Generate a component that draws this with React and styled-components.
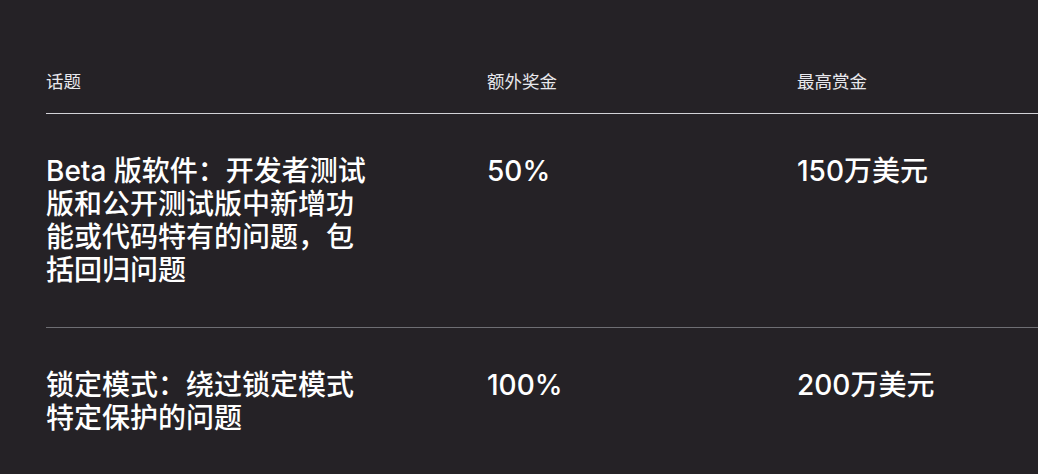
import React from "react";
import styled, { createGlobalStyle } from "styled-components";

const GlobalStyle = createGlobalStyle`
  html, body {
    margin: 0;
    padding: 0;
    background: #252226;
    overflow: hidden;
  }
  body {
    font-family: "Inter", "Noto Sans CJK SC", sans-serif;
    color: #f5f5f7;
    -webkit-font-smoothing: antialiased;
  }
`;

const Page = styled.div`
  width: 1038px;
  height: 474px;
  padding: 68px 0 0 46px;
  box-sizing: border-box;
`;

const Table = styled.div`
  width: 1040px;
`;

const Row = styled.div`
  display: grid;
  grid-template-columns: 441px 310px 1fr;
  align-items: start;
  padding: ${(p) => (p.head ? "0 0 20px" : "41px 0 40px")};
  border-bottom: 1px solid ${(p) => (p.head ? "#d2d2d7" : "#6e6e73")};

  &:last-child {
    border-bottom: none;
  }
`;

const HeadCell = styled.div`
  font-size: 17.5px;
  line-height: 25px;
  font-weight: 400;
  color: #e8e8ed;
  font-family: "Noto Sans CJK SC", "Inter", sans-serif;
`;

const Topic = styled.div`
  max-width: 325px;
  font-size: 28px;
  line-height: 33px;
  font-weight: 500;
  color: #ffffff;
`;

const Value = styled.div`
  font-size: 28px;
  line-height: 33px;
  font-weight: 500;
  color: #ffffff;
`;

const rows = [
  {
    topic: "Beta 版软件：开发者测试版和公开测试版中新增功能或代码特有的问题，包括回归问题",
    bonus: "50%",
    max: "150万美元",
  },
  {
    topic: "锁定模式：绕过锁定模式特定保护的问题",
    bonus: "100%",
    max: "200万美元",
  },
];

export default function App() {
  return (
    <>
      <GlobalStyle />
      <Page>
        <Table>
          <Row head>
            <HeadCell>话题</HeadCell>
            <HeadCell>额外奖金</HeadCell>
            <HeadCell>最高赏金</HeadCell>
          </Row>
          {rows.map((r) => (
            <Row key={r.bonus}>
              <Topic>{r.topic}</Topic>
              <Value>{r.bonus}</Value>
              <Value>{r.max}</Value>
            </Row>
          ))}
        </Table>
      </Page>
    </>
  );
}
